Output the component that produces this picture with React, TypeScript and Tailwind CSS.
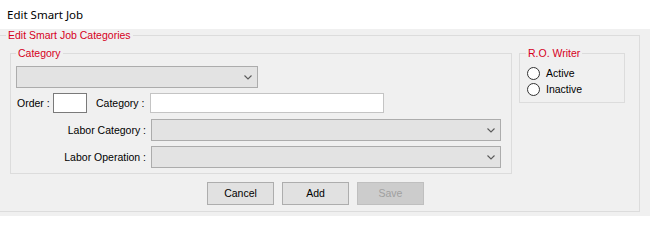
import React from 'react'

// WinForms-style "Edit Smart Job" dialog
const FONT = { fontFamily: '"Liberation Sans", Arial, sans-serif' }

function Chevron() {
  return (
    <svg width="8" height="5" viewBox="0 0 8 5" className="shrink-0">
      <polyline points="0.5,0.5 4,4 7.5,0.5" fill="none" stroke="#5a5a5a" strokeWidth="1.1" />
    </svg>
  )
}

function Combo({ width }: { width: string }) {
  return (
    <div className={`${width} h-[22px] flex items-center justify-end pr-[5px] bg-[#e3e3e3] border border-[#acacac]`}>
      <Chevron />
    </div>
  )
}

function Radio({ label }: { label: string }) {
  return (
    <label className="flex items-center gap-[6px] h-[16px]">
      <span className="w-[13px] h-[13px] rounded-full border border-[#333] bg-white shrink-0" />
      <span>{label}</span>
    </label>
  )
}

export default function App() {
  return (
    <div className="w-[650px] h-[216px] flex flex-col overflow-hidden bg-[#f0f0f0] text-[10.5px] leading-[13px] text-black" style={FONT}>
      {/* Window caption */}
      <div
        className="h-[29px] shrink-0 bg-white flex items-center pl-[7px] text-[11.5px]"
        style={{ fontFamily: '"Noto Sans", "Open Sans", sans-serif' }}
      >
        Edit Smart Job
      </div>

      <div className="flex-1 bg-[#f0f0f0]">
        {/* Outer group box */}
        <fieldset className="w-[640px] h-[183px] border-y border-r border-l-0 border-[#dcdcdc]">
          <legend className="ml-[6px] px-[2px] text-[#d6001c]">Edit Smart Job Categories</legend>

          <div className="flex items-start pt-[5px] pl-[10px] gap-[7px]">
            {/* Category group */}
            <fieldset className="w-[502px] h-[127px] border border-[#dcdcdc]">
              <legend className="ml-[5px] px-[2px] text-[#d6001c]">Category</legend>
              <div className="flex flex-col pl-[5px]">
                <div className="mt-[6px]">
                  <Combo width="w-[242px]" />
                </div>

                <div className="mt-[5px] flex items-center h-[20px]">
                  <span className="w-[37px] pl-[1px]">Order :</span>
                  <div className="w-[34px] h-[20px] bg-white border border-[#7a7a7a]" />
                  <span className="ml-[9px] w-[54px]">Category :</span>
                  <div className="w-[234px] h-[20px] bg-white border border-[#c4c4c4]" />
                </div>

                <div className="mt-[6px] flex items-center">
                  <span className="w-[130px] text-right">Labor Category :</span>
                  <div className="ml-[5px]">
                    <Combo width="w-[350px]" />
                  </div>
                </div>

                <div className="mt-[5px] flex items-center">
                  <span className="w-[130px] text-right">Labor Operation :</span>
                  <div className="ml-[5px]">
                    <Combo width="w-[350px]" />
                  </div>
                </div>
              </div>
            </fieldset>

            {/* R.O. Writer group */}
            <fieldset className="w-[106px] h-[56px] border border-[#dcdcdc]">
              <legend className="ml-[6px] px-[2px] text-[#d6001c]">R.O. Writer</legend>
              <div className="flex flex-col pl-[7px] pt-[5px]">
                <Radio label="Active" />
                <Radio label="Inactive" />
              </div>
            </fieldset>
          </div>

          {/* Buttons */}
          <div className="flex gap-[8px] ml-[207px] mt-[8px]">
            <button className="w-[67px] h-[23px] bg-[#e1e1e1] border border-[#adadad]">Cancel</button>
            <button className="w-[67px] h-[23px] bg-[#e1e1e1] border border-[#adadad]">Add</button>
            <button disabled className="w-[67px] h-[23px] bg-[#cccccc] border border-[#bfbfbf] text-[#a0a0a0]">
              Save
            </button>
          </div>
        </fieldset>
      </div>
    </div>
  )
}
